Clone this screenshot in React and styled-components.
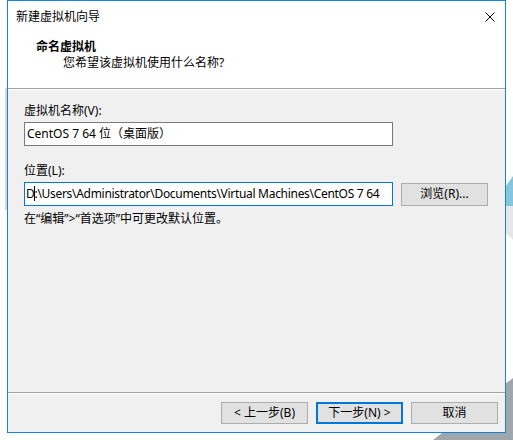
import styled, { createGlobalStyle } from 'styled-components'

const GlobalStyle = createGlobalStyle`
  html, body {
    margin: 0;
    padding: 0;
    background: #fff;
  }
  body {
    font-family: "Noto Sans", "Noto Sans CJK SC", sans-serif;
    font-size: 12px;
    color: #000;
  }
`

const Screen = styled.div`
  position: relative;
  width: 513px;
  height: 440px;
  overflow: hidden;
  padding-left: 7px;
  box-sizing: border-box;
`

const Desktop = styled.svg`
  position: absolute;
  inset: 0;
  z-index: 0;
`

const Dialog = styled.div`
  position: relative;
  z-index: 1;
  width: 499px;
  height: 433px;
  box-sizing: border-box;
  border: 1px solid #1883d7;
  background: #fff;
  display: flex;
  flex-direction: column;
`

const Header = styled.div`
  height: 87px;
  flex-shrink: 0;
  background: #fff;
`

const TitleBar = styled.div`
  height: 30px;
  display: flex;
  align-items: center;
  justify-content: space-between;
  padding: 1px 10px 0 8px;
  box-sizing: border-box;
  line-height: 16px;
`

const HeaderText = styled.div`
  padding: 8px 0 0 28px;
  line-height: 16px;
`

const Heading = styled.div`
  font-weight: bold;
`

const Subtitle = styled.div`
  padding-left: 27px;
`

const Etched = styled.div`
  flex-shrink: 0;
  border-top: 1px solid #a0a0a0;
  border-bottom: 1px solid #fff;
`

const Body = styled.div`
  flex: 1;
  background: #f0f0f0;
  padding: 13px 0 0 16px;
`

const Field = styled.div`
  margin-top: ${(p) => p.$offset || 0}px;
`

const Label = styled.div`
  line-height: 16px;
  margin-bottom: 3px;
`

const Row = styled.div`
  display: flex;
  align-items: center;
  gap: 8px;
`

const TextBox = styled.div`
  width: 369px;
  height: 24px;
  box-sizing: border-box;
  border: 1px solid ${(p) => (p.$focused ? '#0078d7' : '#7a7a7a')};
  background: #fff;
  padding-left: ${(p) => (p.$focused ? 1 : 2)}px;
  line-height: 22px;
  letter-spacing: ${(p) => (p.$focused ? '-0.3px' : 'normal')};
  white-space: nowrap;
  overflow: hidden;
`

const CaretChar = styled.span`
  position: relative;

  &::before {
    content: '';
    position: absolute;
    left: 0;
    top: 1px;
    width: 1px;
    height: 15px;
    background: #000;
  }
`

const Hint = styled.div`
  margin-top: 5px;
  line-height: 16px;
`

const ButtonBar = styled.div`
  height: 38px;
  flex-shrink: 0;
  background: #f0f0f0;
  display: flex;
  justify-content: flex-end;
  align-items: flex-start;
  gap: 8px;
  padding: 8px 7px 0 0;
  box-sizing: border-box;
`

const Button = styled.button`
  width: 87px;
  height: ${(p) => p.$h || 22}px;
  box-sizing: border-box;
  padding: 0;
  margin: 0;
  border: ${(p) => (p.$default ? '2px solid #0078d7' : '1px solid #adadad')};
  background: #e1e1e1;
  font-family: inherit;
  font-size: 12px;
  color: #000;
  line-height: 16px;
`

const CloseIcon = () => (
  <svg width="10" height="10" viewBox="0 0 10 10">
    <path d="M0.5 0.5 L9.5 9.5 M9.5 0.5 L0.5 9.5" stroke="#000" strokeWidth="1" fill="none" />
  </svg>
)

export default function App() {
  return (
    <>
      <GlobalStyle />
      <Screen>
        <Desktop width="513" height="440" viewBox="0 0 513 440">
          <rect x="5" y="88" width="2" height="122" fill="#d6d6d6" />
          <polygon points="506,186 513,176 513,206 506,206" fill="#82c6dd" />
          <polygon points="506,206 513,206 513,240 506,233" fill="#e5e6e8" />
          <polygon points="433,440 513,378 513,440" fill="#a0a7ac" />
        </Desktop>
        <Dialog>
          <Header>
            <TitleBar>
              <span>新建虚拟机向导</span>
              <CloseIcon />
            </TitleBar>
            <HeaderText>
              <Heading>命名虚拟机</Heading>
              <Subtitle>您希望该虚拟机使用什么名称?</Subtitle>
            </HeaderText>
          </Header>
          <Etched />
          <Body>
            <Field>
              <Label>虚拟机名称(V):</Label>
              <TextBox>CentOS 7 64 位（桌面版）</TextBox>
            </Field>
            <Field $offset={17}>
              <Label>位置(L):</Label>
              <Row>
                <TextBox $focused>
                  D<CaretChar>:</CaretChar>\Users\Administrator\Documents\Virtual Machines\CentOS 7 64
                </TextBox>
                <Button $h={23}>浏览(R)...</Button>
              </Row>
            </Field>
            <Hint>在“编辑”&gt;“首选项”中可更改默认位置。</Hint>
          </Body>
          <Etched />
          <ButtonBar>
            <Button>&lt; 上一步(B)</Button>
            <Button $default>下一步(N) &gt;</Button>
            <Button>取消</Button>
          </ButtonBar>
        </Dialog>
      </Screen>
    </>
  )
}
